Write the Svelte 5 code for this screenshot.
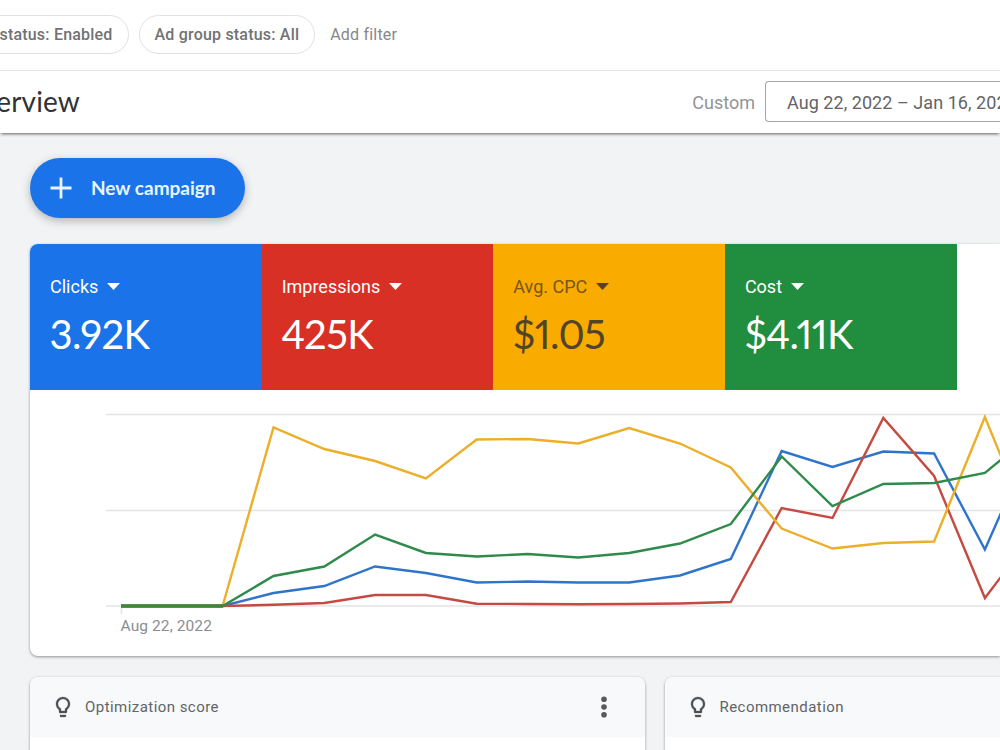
<script lang="ts">
    interface Metric {
        label: string
        value: string
        color: string
        dark?: boolean
    }

    interface Series {
        name: string
        color: string
        points: number[]
    }

    const filters = ['Campaign status: Enabled', 'Ad group status: All']

    const metrics: Metric[] = [
        { label: 'Clicks', value: '3.92K', color: '#1a73e8' },
        { label: 'Impressions', value: '425K', color: '#d83025' },
        { label: 'Avg. CPC', value: '$1.05', color: '#f9ab00', dark: true },
        { label: 'Cost', value: '$4.11K', color: '#218d3f' },
    ]

    // heights above the baseline, one per week
    const series: Series[] = [
        {
            name: 'clicks',
            color: '#2f74cb',
            points: [0, 0, 0, 13, 20, 39.5, 33, 23.5, 24.5, 23.5, 23.5, 30.5, 47, 155, 139, 154.5, 152.5, 56.5, 172],
        },
        {
            name: 'impressions',
            color: '#c44a42',
            points: [0, 0, 0, 1.2, 3, 11, 11, 2.3, 2, 1.8, 2, 2.5, 4, 98, 88, 188, 130, 8, 75],
        },
        {
            name: 'cpc',
            color: '#ebaf2a',
            points: [0, 0, 0, 178.5, 157, 145, 127.5, 166.5, 167, 162.5, 178, 162.5, 138.5, 77.5, 57.5, 63, 64.5, 189, 65],
        },
        {
            name: 'cost',
            color: '#2f8a4b',
            points: [0, 0, 0, 30, 39.5, 71.5, 53, 49.5, 52, 48.5, 53, 62.5, 82, 149.5, 100, 122, 123, 133, 175],
        },
    ]

    const baseline = 216
    const startX = 91
    const stepX = 50.82

    function toPath(points: number[]): string {
        return points.map((p, i) => `${(startX + i * stepX).toFixed(1)},${baseline - p}`).join(' ')
    }
</script>

{#snippet bulb()}
    <svg class="bulb" width="24" height="24" viewBox="0 0 24 24">
        <path
            d="M9 21c0 .5.4 1 1 1h4c.6 0 1-.5 1-1v-1H9v1zm3-19C8.1 2 5 5.1 5 9c0 2.400 1.200 4.500 3 5.700V17c0 .5.4 1 1 1h6c.6 0 1-.5 1-1v-2.300c1.800-1.300 3-3.400 3-5.700 0-3.900-3.100-7-7-7zm2.900 11.100l-.9.600V16h-4v-2.300l-.9-.6C7.800 12.200 7 10.600 7 9c0-2.800 2.200-5 5-5s5 2.200 5 5c0 1.600-.8 3.200-2.100 4.100z"
        />
    </svg>
{/snippet}

<div class="page">
    <div class="filter-bar">
        {#each filters as filter}
            <span class="chip">{filter}</span>
        {/each}
        <span class="add-filter">Add filter</span>
    </div>

    <header class="title-bar">
        <h1 class="title">Overview</h1>
        <span class="range-label">Custom</span>
        <div class="date-range">Aug 22, 2022 – Jan 16, 2023</div>
    </header>

    <main class="content">
        <button class="new-campaign">
            <svg width="22" height="22" viewBox="0 0 22 22">
                <path d="M11 0.500v21M0.500 11h21" stroke="currentColor" stroke-width="2.800" />
            </svg>
            <span>New campaign</span>
        </button>

        <section class="card scorecard">
            <div class="metrics">
                {#each metrics as metric}
                    <div class="metric" class:dark={metric.dark} style:background={metric.color}>
                        <div class="metric-label">
                            {metric.label}
                            <svg width="13" height="7" viewBox="0 0 13 7"><path d="M0 0h13L6.500 7z" /></svg>
                        </div>
                        <div class="metric-value">{metric.value}</div>
                    </div>
                {/each}
            </div>

            <svg class="chart" width="970" height="267" viewBox="0 0 970 267">
                {#each [24.5, 120.5, 216] as y}
                    <line class="grid-line" x1="76" x2="970" y1={y} y2={y} />
                {/each}
                <line class="grid-line" x1="91.500" x2="91.500" y1="217" y2="224" />
                {#each series as s (s.name)}
                    <polyline points={toPath(s.points)} stroke={s.color} />
                {/each}
                <line x1="91" x2="193" y1="216" y2="216" stroke="#3f8638" stroke-width="3.400" />
                <text x="90.500" y="241">Aug 22, 2022</text>
            </svg>
        </section>

        <div class="card-row">
            <section class="card small-card">
                <div class="card-header">
                    {@render bulb()}
                    <span>Optimization score</span>
                    <svg class="more" width="6" height="22" viewBox="0 0 6 22">
                        <circle cx="3" cy="3.200" r="2.800" />
                        <circle cx="3" cy="11" r="2.800" />
                        <circle cx="3" cy="18.800" r="2.800" />
                    </svg>
                </div>
            </section>
            <section class="card small-card">
                <div class="card-header">
                    {@render bulb()}
                    <span>Recommendation</span>
                </div>
            </section>
        </div>
    </main>
</div>

<style>
    :global(body) {
        overflow: hidden;
    }

    .page {
        width: 1000px;
        height: 750px;
        overflow: hidden;
        display: flex;
        flex-direction: column;
        background: #f1f3f4;
        font-family: Roboto, sans-serif;
        color: #5f6368;
    }

    .filter-bar {
        box-sizing: border-box;
        flex: none;
        height: 71px;
        display: flex;
        align-items: center;
        padding-bottom: 2px;
        background: #fff;
        border-bottom: 1px solid #e4e5e6;
        font-size: 16px;
        letter-spacing: 0.2px;
        white-space: nowrap;
    }

    .chip {
        box-sizing: border-box;
        height: 39px;
        line-height: 37px;
        padding: 0 15px;
        margin-right: 10px;
        border: 1px solid #e0e1e3;
        border-radius: 20px;
        font-weight: 500;
        color: #717274;
    }

    .chip:first-child {
        margin-left: -95px;
    }

    .add-filter {
        margin-left: 5px;
        color: #85878a;
    }

    .title-bar {
        box-sizing: border-box;
        flex: none;
        height: 62px;
        display: flex;
        align-items: center;
        background: #fff;
        box-shadow: 0 2px 3px -1px rgba(0, 0, 0, 0.6);
        z-index: 1;
        white-space: nowrap;
    }

    .title {
        width: 80px;
        margin: 0;
        padding-bottom: 2px;
        display: flex;
        justify-content: flex-end;
        font-family: Lato, sans-serif;
        font-size: 28px;
        font-weight: 400;
        letter-spacing: 0.15px;
        color: #303236;
    }

    .range-label {
        margin-left: auto;
        margin-right: 10px;
        font-size: 18px;
        color: #929497;
    }

    .date-range {
        box-sizing: border-box;
        flex: none;
        width: 235px;
        height: 41px;
        margin-bottom: 1px;
        line-height: 41px;
        padding-left: 21px;
        border: 1px solid #a2a4a7;
        border-right: 0;
        border-radius: 4px 0 0 4px;
        font-size: 18px;
        letter-spacing: 0.05px;
        color: #636466;
        overflow: hidden;
    }

    .content {
        flex: 1;
        padding: 25px 0 0 30px;
    }

    .new-campaign {
        width: 215px;
        height: 60px;
        display: flex;
        align-items: center;
        gap: 19px;
        padding: 0 0 0 20px;
        border: 0;
        border-radius: 30px;
        background: #1a73e8;
        box-shadow: 0 3px 8px rgba(60, 64, 67, 0.35);
        font-family: Lato, sans-serif;
        font-size: 19px;
        font-weight: 700;
        color: #e8f5ff;
        white-space: nowrap;
    }

    .new-campaign span {
        padding-bottom: 2px;
    }

    .card {
        background: #fff;
        border-radius: 8px;
        box-shadow: 0 1px 3px rgba(0, 0, 0, 0.4);
        overflow: hidden;
    }

    .scorecard {
        height: 412.5px;
        margin-top: 25.5px;
        border-radius: 8px 0 0 8px;
    }

    .metrics {
        width: 926.5px;
        height: 146px;
        display: grid;
        grid-template-columns: repeat(4, 1fr);
    }

    .metric {
        padding: 29.5px 20px 0;
        color: #fff;
    }

    .metric.dark {
        color: #51442a;
    }

    .metric-label {
        display: flex;
        align-items: center;
        gap: 9px;
        height: 26px;
        font-size: 18px;
    }

    .metric-label svg {
        fill: currentColor;
    }

    .metric.dark .metric-label {
        color: #79561a;
    }

    .metric.dark .metric-label svg {
        fill: #51442a;
    }

    .metric-value {
        margin-top: 11px;
        margin-left: -0.5px;
        font-family: Lato, sans-serif;
        font-size: 40px;
        line-height: 48px;
        font-variant-numeric: proportional-nums;
        letter-spacing: -0.6px;
    }

    .chart {
        display: block;
    }

    .chart polyline {
        fill: none;
        stroke-width: 2.4;
    }

    .grid-line {
        stroke: #e3e4e5;
        stroke-width: 1.5;
    }

    .chart text {
        font-size: 15.5px;
        letter-spacing: 0.1px;
        fill: #8b8d90;
    }

    .card-row {
        display: flex;
        gap: 19.5px;
        margin-top: 20.5px;
    }

    .small-card {
        flex: none;
        width: 615px;
        height: 120px;
    }

    .card-header {
        box-sizing: border-box;
        height: 60px;
        display: flex;
        align-items: center;
        padding: 0 38px 0 21px;
        background: #f7f9fb;
        font-size: 15px;
        letter-spacing: 0.45px;
        color: #626466;
    }

    .bulb {
        margin-right: 10px;
        fill: #4d5054;
        stroke: #4d5054;
        stroke-width: 0.3;
    }

    .more {
        margin-left: auto;
        fill: #57595c;
    }
</style>
